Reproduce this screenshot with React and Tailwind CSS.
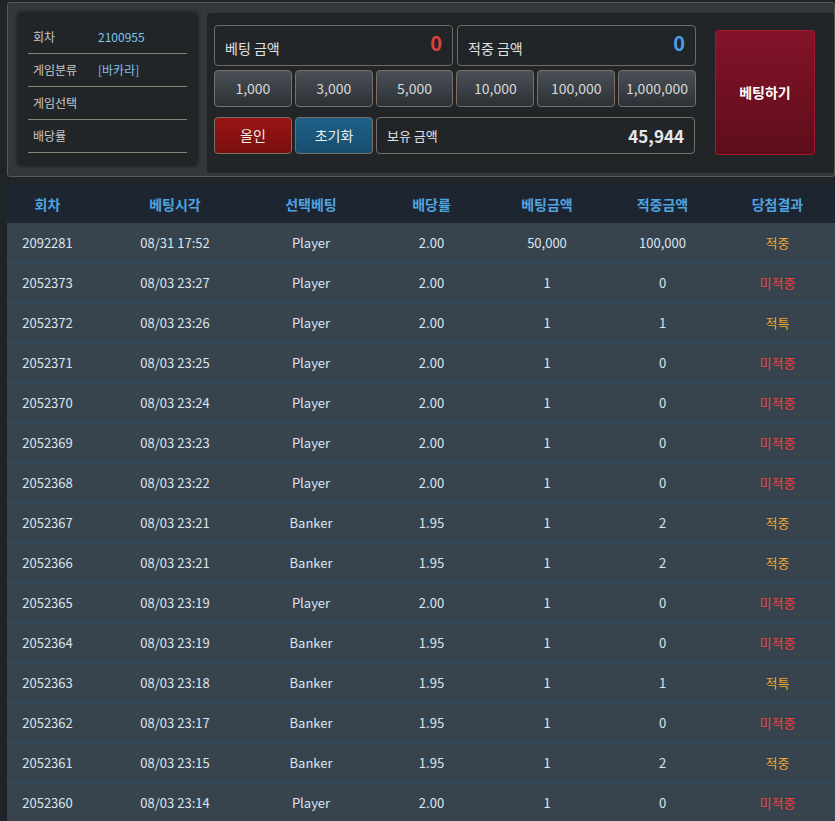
import React from "react";

const rows = [
  ["2092281", "08/31 17:52", "Player", "2.00", "50,000", "100,000", "적중"],
  ["2052373", "08/03 23:27", "Player", "2.00", "1", "0", "미적중"],
  ["2052372", "08/03 23:26", "Player", "2.00", "1", "1", "적특"],
  ["2052371", "08/03 23:25", "Player", "2.00", "1", "0", "미적중"],
  ["2052370", "08/03 23:24", "Player", "2.00", "1", "0", "미적중"],
  ["2052369", "08/03 23:23", "Player", "2.00", "1", "0", "미적중"],
  ["2052368", "08/03 23:22", "Player", "2.00", "1", "0", "미적중"],
  ["2052367", "08/03 23:21", "Banker", "1.95", "1", "2", "적중"],
  ["2052366", "08/03 23:21", "Banker", "1.95", "1", "2", "적중"],
  ["2052365", "08/03 23:19", "Player", "2.00", "1", "0", "미적중"],
  ["2052364", "08/03 23:19", "Banker", "1.95", "1", "0", "미적중"],
  ["2052363", "08/03 23:18", "Banker", "1.95", "1", "1", "적특"],
  ["2052362", "08/03 23:17", "Banker", "1.95", "1", "0", "미적중"],
  ["2052361", "08/03 23:15", "Banker", "1.95", "1", "2", "적중"],
  ["2052360", "08/03 23:14", "Player", "2.00", "1", "0", "미적중"],
];

const cols = "grid grid-cols-[95px_146px_126px_115px_116px_115px_115px]";
const headers = ["회차", "베팅시각", "선택베팅", "배당률", "베팅금액", "적중금액", "당첨결과"];
const chips = ["1,000", "3,000", "5,000", "10,000", "100,000", "1,000,000"];

function InfoRow({ label, value }) {
  return (
    <div className="flex items-center h-[33px] border-b border-[#8a8478] text-[12px]">
      <span className="w-[70px] pl-[5px] text-[#c8c8c8]">{label}</span>
      <span className="text-[#7fc4f0]">{value}</span>
    </div>
  );
}

export default function App() {
  return (
    <div
      className="w-[835px] h-[821px] overflow-hidden bg-[#1f2428] pt-[2px] pl-[7px]"
      style={{ fontFamily: '"Noto Sans CJK KR", "Noto Sans", sans-serif' }}
    >
      <div className="h-[175px] bg-[#32373a] border border-[#5c5750] rounded-[3px] flex gap-[10px] pl-[10px] pt-[10px]">
        <div className="w-[179px] h-[152px] bg-[#222528] rounded-[3px] px-[10px] pt-[8px] shadow-[0_0_4px_#111]">
          <InfoRow label="회차" value="2100955" />
          <InfoRow label="게임분류" value="[바카라]" />
          <InfoRow label="게임선택" value="" />
          <InfoRow label="배당률" value="" />
        </div>
        <div className="flex-1 h-[160px] bg-[#222528] rounded-l-[3px] pl-[7px] pt-[12px] flex gap-[19px]">
          <div className="w-[482px] flex flex-col gap-[4px]">
            <div className="flex gap-[4px]">
              <div className="w-[239px] h-[41px] border border-[#6f6a63] rounded-[4px] flex items-center justify-between px-[10px]">
                <span className="text-[14px] text-[#e0e0e0] mt-[6px]">베팅 금액</span>
                <span className="text-[20px] font-bold text-[#e04040] -mt-[6px]">0</span>
              </div>
              <div className="w-[239px] h-[41px] border border-[#6f6a63] rounded-[4px] flex items-center justify-between px-[10px]">
                <span className="text-[14px] text-[#e0e0e0] mt-[6px]">적중 금액</span>
                <span className="text-[20px] font-bold text-[#4aa0e8] -mt-[6px]">0</span>
              </div>
            </div>
            <div className="flex gap-[3px]">
              {chips.map((c) => (
                <div key={c} className="w-[78px] h-[37px] border border-[#77716a] rounded-[4px] bg-gradient-to-b from-[#4a5056] to-[#2c3136] flex items-center justify-center text-[14px] text-[#d8d8d8]">
                  {c}
                </div>
              ))}
            </div>
            <div className="flex gap-[3px] mt-[6px]">
              <div className="w-[78px] h-[37px] border border-[#77716a] rounded-[4px] bg-gradient-to-b from-[#9a1414] to-[#7a0f0f] flex items-center justify-center text-[14px] text-[#eee]">올인</div>
              <div className="w-[78px] h-[37px] border border-[#77716a] rounded-[4px] bg-gradient-to-b from-[#1e6088] to-[#164e70] flex items-center justify-center text-[14px] text-[#eee]">초기화</div>
              <div className="w-[319px] h-[37px] border border-[#77716a] rounded-[4px] flex items-center justify-between px-[10px]">
                <span className="text-[13px] text-[#e0e0e0]">보유 금액</span>
                <span className="text-[17px] font-bold text-[#e8e8e8]">45,944</span>
              </div>
            </div>
          </div>
          <div className="w-[100px] h-[125px] mt-[5px] rounded-[3px] border border-[#a0182a] bg-gradient-to-b from-[#841329] to-[#5e0d1a] flex items-center justify-center text-[14px] font-bold text-white">
            베팅하기
          </div>
        </div>
      </div>

      <div className="mt-[8px]">
        <div className={`${cols} h-[38px] items-center bg-[#1d2530] text-[14px] font-bold text-[#4fa3e0] text-center`}>
          {headers.map((h, i) => <div key={h} className={i === 0 ? "pr-[14px]" : ""}>{h}</div>)}
        </div>
        {rows.map((r) => (
          <div key={r[0]} className={`${cols} h-[40px] items-center bg-[#37444e] border-b border-[#2c5068] text-[13px] text-[#dbe6f0] text-center`}>
            {r.map((v, i) => (
              <div
                key={i}
                className={
                  i === 6
                    ? v === "미적중" ? "text-[#ff3b3b]" : "text-[#f0a830]"
                    : i === 0 ? "pr-[14px]" : ""
                }
              >
                {v}
              </div>
            ))}
          </div>
        ))}
      </div>
    </div>
  );
}
